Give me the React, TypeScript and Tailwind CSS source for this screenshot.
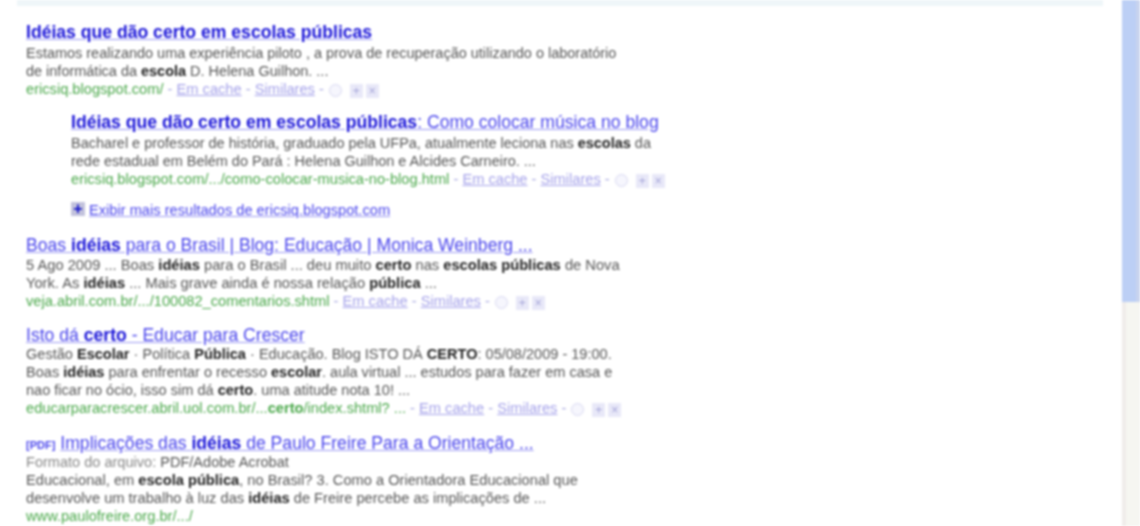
import React from "react";

const Title = ({ children }: { children: React.ReactNode }) => (
  <a className="block text-[#4a45ec] underline decoration-[#9d9af2] text-[17.6px] leading-[24px] whitespace-nowrap">{children}</a>
);

const B = ({ children }: { children: React.ReactNode }) => <b className="font-bold text-[#222]">{children}</b>;
const TB = ({ children }: { children: React.ReactNode }) => <b className="font-bold text-[#1a14d8]">{children}</b>;

const Line = ({ children, size = "text-[14.55px]" }: { children: React.ReactNode; size?: string }) => (
  <div className={`${size} leading-[18px] text-[#555] whitespace-nowrap`}>{children}</div>
);

const Actions = () => (
  <span className="inline-flex items-center gap-[3px] ml-[5px] align-[-3px] text-[#a4a4d8]">
    <span className="w-[13px] h-[13px] rounded-full border border-[#d8d8f2] bg-[#f6f6fd] mr-[5px]" />
    <span className="w-[13px] h-[14px] bg-[#e8e8f8] text-[12px] leading-[14px] text-center">+</span>
    <span className="w-[13px] h-[14px] bg-[#e8e8f8] text-[12px] leading-[14px] text-center">×</span>
  </span>
);

const Url = ({ children, plain }: { children: React.ReactNode; plain?: boolean }) => (
  <div className="text-[14.65px] leading-[18px] whitespace-nowrap text-[#a8a8e0]">
    <span className="text-[#4aa84a]">{children}</span>
    {!plain && (
      <>
        {" "}- <a className="text-[#a5a2ea] underline">Em cache</a> - <a className="text-[#a5a2ea] underline">Similares</a> -
        <Actions />
      </>
    )}
  </div>
);

export default function App() {
  return (
    <div className="flex w-[1140px] h-[526px] overflow-hidden bg-white blur-[1px] font-['Liberation_Sans',Arial,sans-serif]">
      <main className="flex flex-col w-[1122px] shrink-0">
        <div className="ml-[17px] w-[1086px] h-[6px] shrink-0 bg-[#eff6f9]" />
        <div className="flex flex-col pl-[26px] pt-[14px]">
          <section>
            <Title><TB>Idéias que dão certo em escolas públicas</TB></Title>
            <Line size="text-[14.47px]">Estamos realizando uma experiência piloto , a prova de recuperação utilizando o laboratório</Line>
            <Line size="text-[14.47px]">de informática da <B>escola</B> D. Helena Guilhon. ...</Line>
            <Url>ericsiq.blogspot.com/</Url>
          </section>

          <section className="ml-[45px] mt-[12px]">
            <Title><TB>Idéias que dão certo em escolas públicas</TB>: Como colocar música no blog</Title>
            <Line size="text-[14.47px]">Bacharel e professor de história, graduado pela UFPa, atualmente leciona nas <B>escolas</B> da</Line>
            <Line size="text-[14.47px]">rede estadual em Belém do Pará : Helena Guilhon e Alcides Carneiro. ...</Line>
            <Url>ericsiq.blogspot.com/.../como-colocar-musica-no-blog.html</Url>
            <div className="flex items-center mt-[13px] h-[18px]">
              <span className="w-[14px] h-[14px] mr-[4px] -mt-[3px] bg-[#c2c2dc] flex items-center justify-center text-[#1010c8] text-[16px] font-bold leading-none">+</span>
              <a className="text-[#4a45ec] underline decoration-[#9d9af2] text-[14.65px] leading-[18px] whitespace-nowrap">Exibir mais resultados de ericsiq.blogspot.com</a>
            </div>
          </section>

          <section className="mt-[14px]">
            <Title>Boas <TB>idéias</TB> para o Brasil | Blog: Educação | Monica Weinberg ...</Title>
            <div className="-mt-[1px]">
              <Line size="text-[14.7px]">5 Ago 2009 ... Boas <B>idéias</B> para o Brasil ... deu muito <B>certo</B> nas <B>escolas públicas</B> de Nova</Line>
              <Line size="text-[14.7px]">York. As <B>idéias</B> ... Mais grave ainda é nossa relação <B>pública</B> ...</Line>
              <Url>veja.abril.com.br/.../100082_comentarios.shtml</Url>
            </div>
          </section>

          <section className="mt-[13px]">
            <Title>Isto dá <TB>certo</TB> - Educar para Crescer</Title>
            <div className="-mt-[2px]">
              <Line>Gestão <B>Escolar</B> · Política <B>Pública</B> · Educação. Blog ISTO DÁ <B>CERTO</B>: 05/08/2009 - 19:00.</Line>
              <Line>Boas <B>idéias</B> para enfrentar o recesso <B>escolar</B>. aula virtual ... estudos para fazer em casa e</Line>
              <Line>nao ficar no ócio, isso sim dá <B>certo</B>. uma atitude nota 10! ...</Line>
              <Url>educarparacrescer.abril.uol.com.br/...<b>certo</b>/index.shtml? ...</Url>
            </div>
          </section>

          <section className="mt-[14px]">
            <div className="flex items-baseline">
              <span className="text-[#4a45ec] text-[11px] font-bold mr-[5px]">[PDF]</span>
              <Title>Implicações das <TB>idéias</TB> de Paulo Freire Para a Orientação ...</Title>
            </div>
            <div className="-mt-[2px]">
              <Line><span className="text-[#888]">Formato do arquivo:</span> PDF/Adobe Acrobat</Line>
              <Line size="text-[14.65px]">Educacional, em <B>escola pública</B>, no Brasil? 3. Como a Orientadora Educacional que</Line>
              <Line size="text-[14.65px]">desenvolve um trabalho à luz das <B>idéias</B> de Freire percebe as implicações de ...</Line>
              <Url plain>www.paulofreire.org.br/.../</Url>
            </div>
          </section>
        </div>
      </main>
      <aside className="flex flex-col w-[18px] shrink-0">
        <div className="h-[302px] bg-[#bccff5] border-r-4 border-[#c8d3ee]" />
        <div className="flex-1 bg-[#f6f6f1] border-l-4 border-[#f0ecea]" />
      </aside>
    </div>
  );
}
